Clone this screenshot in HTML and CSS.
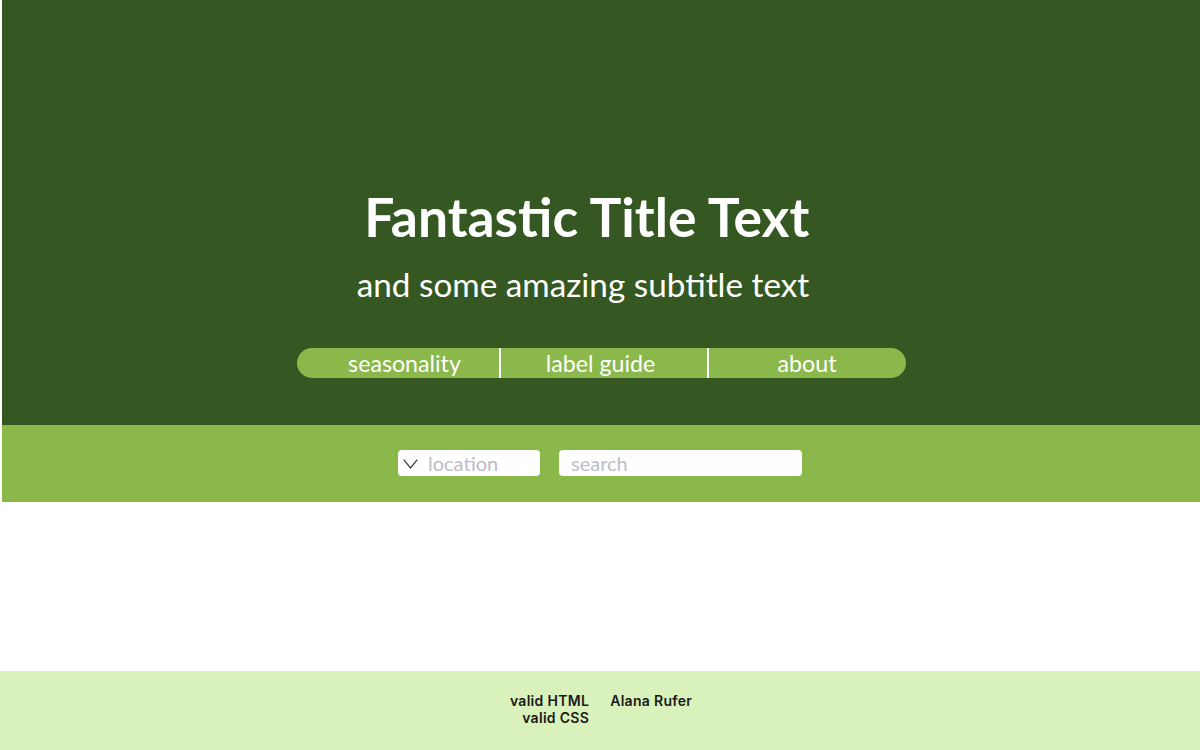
FILE: index.html
```html
<!DOCTYPE html>
<html lang="en">
<head>
<meta charset="utf-8">
<title>Fantastic Title Text</title>
<link rel="stylesheet" href="styles.css">
</head>
<body>
<header class="hero">
  <div class="titles">
    <h1 class="title">Fantastic Title Text</h1>
    <p class="subtitle">and some amazing subtitle text</p>
  </div>
  <nav class="nav">
    <a class="nav-item nav-first" href="#">seasonality</a>
    <a class="nav-item nav-mid" href="#">label guide</a>
    <a class="nav-item nav-last" href="#">about</a>
  </nav>
</header>
<section class="band">
  <label class="select">
    <svg class="chev" viewBox="0 0 15 10" width="15" height="10"><path d="M0.7 0.7 L7.5 9 L14.3 0.7" fill="none" stroke="#3a3a3a" stroke-width="1.2"/></svg>
    <span class="placeholder">location</span>
  </label>
  <label class="search">
    <span class="placeholder">search</span>
  </label>
</section>
<main class="content"></main>
<footer class="footer">
  <div class="foot-left">
    <div>valid HTML</div>
    <div>valid CSS</div>
  </div>
  <div class="foot-right">Alana Rufer</div>
</footer>
</body>
</html>
```

FILE: styles.css
```css
* { box-sizing: border-box; }
html, body { margin: 0; padding: 0; }
body {
  font-family: Lato, "Open Sans", sans-serif;
  background: #ffffff;
  width: 1200px;
}
.hero {
  margin-left: 2px;
  height: 425px;
  background: #355823;
  display: flex;
  flex-direction: column;
  align-items: center;
  padding-top: 181px;
}
.titles {
  text-align: right;
  margin-right: 36px;
  color: #ffffff;
}
.title {
  margin: 0;
  font-size: 53.4px;
  font-weight: 700;
  line-height: 70px;
}
.subtitle {
  margin: 13px 0 0;
  font-size: 33.3px;
  font-weight: 400;
  line-height: 40px;
}
.nav {
  margin-top: 44px;
  width: 609px;
  height: 30px;
  display: flex;
  background: #8bb84a;
  border-radius: 15px;
}
.nav-item {
  color: #ffffff;
  text-decoration: none;
  font-size: 23.2px;
  line-height: 30px;
  text-align: center;
}
.nav-first { width: 202px; padding-left: 14px; }
.nav-mid {
  width: 210px;
  padding-right: 6px;
  border-left: 2px solid #ffffff;
  border-right: 2px solid #ffffff;
}
.nav-last { width: 197px; }
.band {
  margin-left: 2px;
  height: 77px;
  background: #8bb84a;
  display: flex;
  justify-content: center;
  align-items: center;
  gap: 19px;
  padding-right: 2px;
  padding-bottom: 1px;
}
.select, .search {
  height: 26px;
  background: #ffffff;
  border-radius: 4px;
  display: flex;
  align-items: center;
}
.select { width: 142px; padding-left: 5px; gap: 10px; }
.search { width: 243px; padding-left: 12px; }
.chev { display: block; margin-top: 1px; }
.placeholder {
  color: #bdbdc4;
  font-size: 20px;
  line-height: 26px;
}
.content { height: 169px; }
.footer {
  height: 79px;
  background: #d9f1bb;
  display: flex;
  justify-content: center;
  gap: 21px;
  padding-top: 21px;
  padding-left: 2px;
  font-family: Inter, sans-serif;
  font-weight: 600;
  font-size: 14px;
  letter-spacing: 0.3px;
  line-height: 17px;
  color: #1a1a1a;
}
.foot-left { text-align: right; }
```
